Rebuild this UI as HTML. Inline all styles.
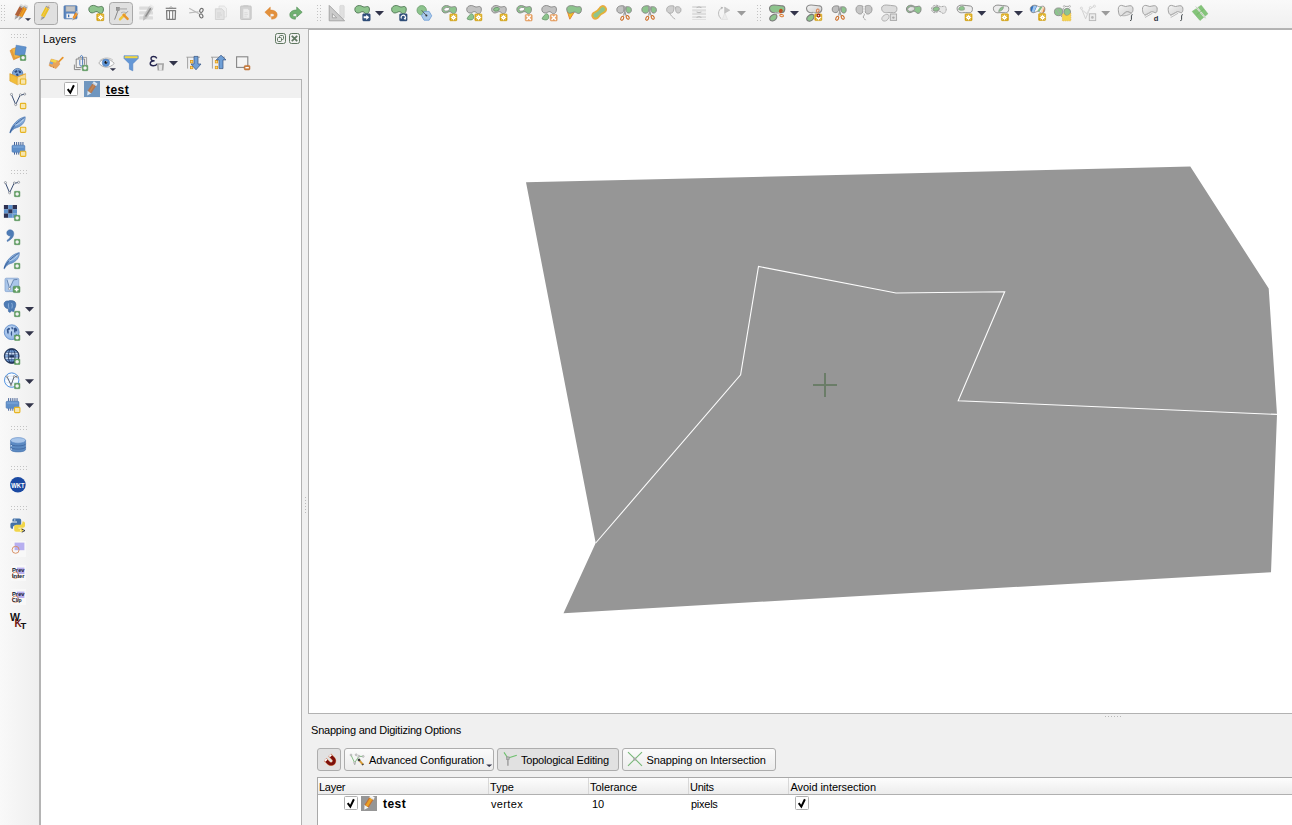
<!DOCTYPE html><html><head><meta charset="utf-8"><title>QGIS</title><style>
html,body{margin:0;padding:0;}
body{width:1292px;height:825px;overflow:hidden;background:#f0f0f0;position:relative;
 font-family:"Liberation Sans",sans-serif;font-size:11px;color:#000;}
.abs{position:absolute;}
#topbar{left:0;top:0;width:1292px;height:28px;background:linear-gradient(#f9f9f9,#f0f0f0);}
#topline{left:0;top:28px;width:1292px;height:1px;background:#b4b4b4;}
#topline2{left:308px;top:29px;width:984px;height:1px;background:#b4b4b4;}
#leftbar{left:0;top:29px;width:39px;height:796px;background:linear-gradient(90deg,#f9f9f9,#efefef);}
#leftline{left:39px;top:29px;width:1px;height:796px;background:#b4b4b4;}#leftline2{left:40px;top:79px;width:1px;height:746px;background:#b4b4b4;}
#tree{left:41px;top:79px;width:261px;height:760px;background:#fff;border:1px solid #b2b2b2;border-left:none;box-sizing:border-box;}
#treerow{left:41px;top:80px;width:260px;height:18px;background:#f0f0f0;}
#map{left:308px;top:29px;width:990px;height:685px;background:#fff;border:1px solid #b2b2b2;box-sizing:border-box;}
.t{position:absolute;white-space:nowrap;line-height:13px;}
.cb{position:absolute;width:14px;height:14px;box-sizing:border-box;border:1px solid #b0b0b0;border-radius:1.5px;background:#fff;}
.btn{position:absolute;box-sizing:border-box;border:1px solid #adadad;border-radius:3px;height:23px;top:748px;}
.hdr{position:absolute;top:779px;height:15px;box-sizing:border-box;border-right:1px solid #d5d5d5;background:#fff;}
</style></head><body>
<div class="abs" id="topbar"></div><div class="abs" id="topline"></div><div class="abs" id="topline2"></div>
<div class="abs" id="leftbar"></div><div class="abs" id="leftline"></div><div class="abs" id="leftline2"></div>
<div class="abs" id="tree"></div><div class="abs" id="treerow"></div>
<div class="abs" id="map"></div>
<div class="t" style="left:43px;top:33px;font-size:11px;letter-spacing:0.000px;">Layers</div>
<div class="cb" style="left:64px;top:82px;"></div>
<div class="abs" style="left:84px;top:81px;width:16px;height:16px;background:#6f96bf;"></div>
<div class="t" style="left:106px;top:83.5px;font-size:12px;letter-spacing:0.467px;font-weight:bold;text-decoration:underline;">test</div>
<div class="t" style="left:311px;top:724px;font-size:11px;letter-spacing:-0.210px;">Snapping and Digitizing Options</div>
<div class="btn" style="left:317px;width:24px;background:#e1e1e1;"></div>
<div class="btn" style="left:344px;width:150px;background:linear-gradient(#fbfbfb,#ececec);"></div>
<div class="btn" style="left:497px;width:122px;background:#e1e1e1;"></div>
<div class="btn" style="left:622px;width:154px;background:linear-gradient(#fbfbfb,#ececec);"></div>
<div class="t" style="left:369px;top:754px;font-size:11px;letter-spacing:-0.105px;">Advanced Configuration</div>
<div class="t" style="left:521px;top:754px;font-size:11px;letter-spacing:-0.206px;">Topological Editing</div>
<div class="t" style="left:646.5px;top:754px;font-size:11px;letter-spacing:-0.100px;">Snapping on Intersection</div>
<div class="abs" style="left:317px;top:777px;width:980px;height:60px;background:#fff;border:1px solid #a8a8a8;box-sizing:border-box;"></div>
<div class="abs" style="left:318px;top:778px;width:974px;height:17px;background:linear-gradient(#fdfdfd,#ececec);border-bottom:1px solid #b0b0b0;box-sizing:border-box;"></div>
<div class="abs" style="left:488px;top:778px;width:1px;height:16px;background:#d8d8d8;"></div>
<div class="abs" style="left:588px;top:778px;width:1px;height:16px;background:#d8d8d8;"></div>
<div class="abs" style="left:688px;top:778px;width:1px;height:16px;background:#d8d8d8;"></div>
<div class="abs" style="left:788px;top:778px;width:1px;height:16px;background:#d8d8d8;"></div>
<div class="t" style="left:319px;top:780.6px;font-size:11px;letter-spacing:-0.250px;">Layer</div>
<div class="t" style="left:490px;top:780.6px;font-size:11px;letter-spacing:0.033px;">Type</div>
<div class="t" style="left:590px;top:780.6px;font-size:11px;letter-spacing:-0.062px;">Tolerance</div>
<div class="t" style="left:690px;top:780.6px;font-size:11px;letter-spacing:-0.275px;">Units</div>
<div class="t" style="left:790.5px;top:780.6px;font-size:11px;letter-spacing:-0.065px;">Avoid intersection</div>
<div class="cb" style="left:344px;top:796px;"></div>
<div class="abs" style="left:361px;top:796px;width:16px;height:14.6px;background:#969696;"></div>
<div class="t" style="left:383px;top:797.5px;font-size:12px;letter-spacing:0.467px;font-weight:bold;">test</div>
<div class="t" style="left:491px;top:797.5px;font-size:11px;letter-spacing:0.340px;">vertex</div>
<div class="t" style="left:592px;top:797.5px;font-size:11px;letter-spacing:0.000px;">10</div>
<div class="t" style="left:691px;top:797.5px;font-size:11px;letter-spacing:-0.260px;">pixels</div>
<div class="cb" style="left:795px;top:796px;"></div>
<svg class="abs" style="left:0;top:0;" width="1292" height="825" viewBox="0 0 1292 825">
<defs>
<linearGradient id="gBadge" x1="0" y1="0" x2="0" y2="1"><stop offset="0" stop-color="#e4b62c"/><stop offset="1" stop-color="#d39f08"/></linearGradient>
<linearGradient id="gLt" x1="0" y1="0" x2="1" y2="1"><stop offset="0" stop-color="#f4f4f4"/><stop offset="1" stop-color="#cfcfcf"/></linearGradient>
<linearGradient id="gBlue" x1="0" y1="0" x2="0" y2="1"><stop offset="0" stop-color="#9fc0e6"/><stop offset="1" stop-color="#4d7fbd"/></linearGradient>
<linearGradient id="gTip" x1="0" y1="0" x2="0" y2="1"><stop offset="0" stop-color="#e8e8e8"/><stop offset="1" stop-color="#6e6e6e"/></linearGradient>
<radialGradient id="gGlobe" cx="0.4" cy="0.35" r="0.7"><stop offset="0" stop-color="#c0d6f2"/><stop offset="1" stop-color="#8eb2e4"/></radialGradient>
</defs>
<polygon points="526,182.3 1190.3,166.6 1268.7,288.5 1277,414.4 1271,572.2 563.5,613.2 595.7,543" fill="#969696"/>
<polyline points="595.7,543 740.6,374.8 758.5,266.4 896,293 1004.7,291.7 958.2,400.7 1277,414.4" fill="none" stroke="#fcfcfc" stroke-width="1.1" stroke-linejoin="miter"/>
<rect x="813" y="384" width="24" height="2" fill="#6b7d68"/><rect x="824" y="373" width="2" height="24" fill="#6b7d68"/>
<rect x="1" y="5" width="1" height="1" fill="#c3c3c3"/>
<rect x="4" y="5" width="1" height="1" fill="#c3c3c3"/>
<rect x="1" y="8" width="1" height="1" fill="#c3c3c3"/>
<rect x="4" y="8" width="1" height="1" fill="#c3c3c3"/>
<rect x="1" y="11" width="1" height="1" fill="#c3c3c3"/>
<rect x="4" y="11" width="1" height="1" fill="#c3c3c3"/>
<rect x="1" y="14" width="1" height="1" fill="#c3c3c3"/>
<rect x="4" y="14" width="1" height="1" fill="#c3c3c3"/>
<rect x="1" y="17" width="1" height="1" fill="#c3c3c3"/>
<rect x="4" y="17" width="1" height="1" fill="#c3c3c3"/>
<rect x="1" y="20" width="1" height="1" fill="#c3c3c3"/>
<rect x="4" y="20" width="1" height="1" fill="#c3c3c3"/>
<g transform="translate(14.6,19.8) rotate(-62)">
<path d="M0,0 L4.59,-2.0 V2.0 Z" fill="url(#gTip)"/>
<rect x="4.59" y="-2.0" width="9.52" height="4" fill="#b0623a"/>
<rect x="14.11" y="-2.0" width="2.89" height="4" fill="#dcdcdc"/>
<rect x="14.11" y="-2.0" width="1.02" height="4" fill="#9a9a9a"/>
</g>
<g transform="translate(18.4,20.6) rotate(-62)">
<path d="M0,0 L4.73,-2.0 V2.0 Z" fill="url(#gTip)"/>
<rect x="4.73" y="-2.0" width="9.80" height="4" fill="#e08a1c"/>
<rect x="4.73" y="-0.60" width="9.80" height="1.20" fill="#eea42c"/>
<rect x="14.52" y="-2.0" width="2.98" height="4" fill="#dcdcdc"/>
<rect x="14.52" y="-2.0" width="1.05" height="4" fill="#9a9a9a"/>
</g>
<path d="M25,18.2 h6 l-3.0,2.8 z" fill="#32344a"/>
<rect x="34.5" y="2.5" width="23" height="22" rx="3" fill="#e0e0e0" stroke="#a9a9a9"/>
<g transform="translate(40.6,20.6) rotate(-62)">
<path d="M0,0 L4.75,-2.1 V2.1 Z" fill="url(#gTip)"/>
<rect x="4.75" y="-2.1" width="9.86" height="4.2" fill="#e9c21c"/>
<rect x="4.75" y="-0.63" width="9.86" height="1.26" fill="#f6dc5c"/>
<rect x="14.61" y="-2.1" width="2.99" height="4.2" fill="#dcdcdc"/>
<rect x="14.61" y="-2.1" width="1.06" height="4.2" fill="#9a9a9a"/>
</g>
<path d="M43.2,16 L49.2,5.4" stroke="#e68a2c" stroke-width="0.6" opacity="0.7"/>
<rect x="64" y="5.8" width="13" height="13" rx="0.8" fill="#5b86c0" stroke="#4670a8" stroke-width="0.7"/>
<rect x="66" y="6.3" width="9" height="5" fill="#c4c4c4" stroke="#a8a8a8" stroke-width="0.5"/>
<rect x="66.4" y="13.6" width="7.8" height="4.6" fill="#f4f4f4"/>
<rect x="68" y="14.6" width="1.3" height="2.6" fill="#3f6fb0"/>
<g transform="translate(72.2,20.6) rotate(-58)">
<path d="M0,0 L2.81,-1.4 V1.4 Z" fill="url(#gTip)"/>
<rect x="2.81" y="-1.4" width="5.82" height="2.8" fill="#e8861c"/>
<rect x="2.81" y="-0.42" width="5.82" height="0.84" fill="#f2a640"/>
<rect x="8.63" y="-1.4" width="1.77" height="2.8" fill="#dcdcdc"/>
<rect x="8.63" y="-1.4" width="0.62" height="2.8" fill="#9a9a9a"/>
</g>
<path transform="translate(88.6,5.4)" d="M0.2,3.8 C0.2,1.4 2.4,0 4.8,0 C7,0 8,1.5 9.6,1.5 C11.2,1.5 12.4,0.7 13.4,1.1 C14.6,1.5 15,3 14.8,4.6 C14.6,6.6 13.6,8.2 11.8,8.2 C10.4,8.2 10,6.6 8.4,6.2 C6.8,5.8 5.6,7.4 3.6,7.5 C1.6,7.6 0.2,6 0.2,3.8 Z" fill="#8dc48d" stroke="#4f7554" stroke-width="0.9" />
<path d="M99.6,12.6 L100.2,14" stroke="#5e8c62" stroke-width="0.8"/>
<rect x="96.7" y="13.799999999999999" width="7.1" height="6.8999999999999995" rx="0.8" fill="url(#gBadge)" stroke="#cf9b06" stroke-width="0.5"/>
<polygon points="100.50,14.35 101.15,15.93 102.73,15.27 102.07,16.85 103.65,17.50 102.07,18.15 102.73,19.73 101.15,19.07 100.50,20.65 99.85,19.07 98.27,19.73 98.93,18.15 97.35,17.50 98.93,16.85 98.27,15.27 99.85,15.93" fill="#fff"/>
<circle cx="100.5" cy="17.5" r="0.6" fill="#efd27a"/>
<rect x="109.5" y="2.5" width="23" height="22" rx="3" fill="#e0e0e0" stroke="#a9a9a9"/>
<rect x="116.3" y="7.3" width="3.2" height="3" fill="#9a9a9a" stroke="#7a7a7a" stroke-width="0.5"/>
<path d="M119.6,8.9 H127" stroke="#b8b8b8" stroke-width="1.5"/>
<path d="M118,10.4 L114.6,19.6" stroke="#808080" stroke-width="0.9"/>
<path d="M128,11.2 L122.4,17" stroke="#8a8a8a" stroke-width="0.9"/>
<path d="M121,13 a3,2 0 0 1 5,0" stroke="#b0b0b0" stroke-width="1" fill="none"/>
<path d="M120,19.3 L124.6,14.6" stroke="#f0c83c" stroke-width="2.4" stroke-linecap="round"/>
<path d="M123.6,14.8 L127.6,18.9" stroke="#e8952c" stroke-width="2.4" stroke-linecap="round"/>
<rect x="139.2" y="6.4" width="13.8" height="3.3" rx="0.6" fill="#dcdcdc"/>
<rect x="139.2" y="11.3" width="13.8" height="3.3" rx="0.6" fill="#dcdcdc"/>
<rect x="139.2" y="16.3" width="13.8" height="3.3" rx="0.6" fill="#dcdcdc"/>
<g transform="translate(143,20.8) rotate(-58.5)">
<path d="M0,0 L4.86,-2.3 V2.3 Z" fill="#bcbcbc"/>
<rect x="4.86" y="-2.3" width="10.08" height="4.6" fill="#c6c6c6"/>
<rect x="4.86" y="-0.78" width="10.08" height="1.56" fill="#8c8c8c"/>
<rect x="14.94" y="-2.3" width="3.06" height="4.6" fill="#ececec"/>
<rect x="14.94" y="-2.3" width="1.08" height="4.6" fill="#cfcfcf"/>
</g>
<path d="M165.7,8.3 H176.3" stroke="#7b7b7b" stroke-width="1.2"/>
<path d="M169.3,7.8 Q171,5.6 172.7,7.8" stroke="#a0a0a0" stroke-width="0.9" fill="none"/>
<path d="M166.6,10.6 H175.5 L175.2,19.3 H166.9 Z" fill="#fdfdfd" stroke="#7b7b7b" stroke-width="1.3" stroke-linejoin="round"/>
<path d="M169.5,10.8 V19 M172.7,10.8 V19" stroke="#7b7b7b" stroke-width="1.1"/>
<path d="M189.2,8.2 L199,13.8 M189.2,12.9 L198.6,11.8" stroke="#bdbdbd" stroke-width="1.1" fill="none"/>
<ellipse cx="201.4" cy="10.4" rx="1.6" ry="2.1" transform="rotate(25 201.4 10.4)" fill="none" stroke="#707070" stroke-width="1.1"/>
<ellipse cx="201.2" cy="15.9" rx="1.6" ry="2.1" transform="rotate(-25 201.2 15.9)" fill="none" stroke="#707070" stroke-width="1.1"/>
<path d="M219,6 h5.2 l2.3,2.3 v8.7 h-7.5 z" fill="#f0f0f0" stroke="#dadada" stroke-width="0.7"/>
<path d="M215.4,8.8 h6.3 l2.4,2.4 v8.3 h-8.7 z" fill="#e3e3e3" stroke="#cfcfcf" stroke-width="0.8"/>
<path d="M217,13 h4 M217,15 h5 M217,17 h3" stroke="#d2d2d2" stroke-width="0.8"/>
<rect x="240.6" y="6" width="10.6" height="13.5" rx="0.8" fill="#d2d2d2" stroke="#c0c0c0" stroke-width="0.8"/>
<rect x="243.4" y="5.2" width="5" height="1.8" fill="#cacaca"/>
<path d="M243,8.6 h4.6 l2,2 v7.6 h-6.6 z" fill="#ececec" stroke="#cdcdcd" stroke-width="0.5"/>
<path d="M244.4,12.6 h3 M244.4,14.4 h3.6 M244.4,16.2 h2.4" stroke="#d6d6d6" stroke-width="0.7"/>
<path d="M264.8,12.2 L270.3,7 V10 C274.6,10 277.2,11.9 277.2,14.8 C277.2,17.6 274.9,19.3 271.6,19.2 L271.4,16.4 C273.3,16.6 274.3,15.9 274.2,14.9 C274.1,13.9 272.8,13.6 270.3,13.7 V17.2 Z" fill="#e2903c" stroke="#d8822c" stroke-width="0.4"/>
<path d="M302.2,12.2 L296.7,7 V10 C292.4,10 289.8,11.9 289.8,14.8 C289.8,17.6 292.1,19.3 295.4,19.2 L295.6,16.4 C293.7,16.6 292.7,15.9 292.8,14.9 C292.9,13.9 294.2,13.6 296.7,13.7 V17.2 Z" fill="#6fb070" stroke="#548f58" stroke-width="0.6"/>
<rect x="317" y="5" width="1" height="1" fill="#c3c3c3"/>
<rect x="320" y="5" width="1" height="1" fill="#c3c3c3"/>
<rect x="317" y="8" width="1" height="1" fill="#c3c3c3"/>
<rect x="320" y="8" width="1" height="1" fill="#c3c3c3"/>
<rect x="317" y="11" width="1" height="1" fill="#c3c3c3"/>
<rect x="320" y="11" width="1" height="1" fill="#c3c3c3"/>
<rect x="317" y="14" width="1" height="1" fill="#c3c3c3"/>
<rect x="320" y="14" width="1" height="1" fill="#c3c3c3"/>
<rect x="317" y="17" width="1" height="1" fill="#c3c3c3"/>
<rect x="320" y="17" width="1" height="1" fill="#c3c3c3"/>
<rect x="317" y="20" width="1" height="1" fill="#c3c3c3"/>
<rect x="320" y="20" width="1" height="1" fill="#c3c3c3"/>
<rect x="339.8" y="5.4" width="4.4" height="13" rx="1" fill="#e0e0e0" stroke="#d2d2d2" stroke-width="0.6"/>
<path d="M329.2,5.4 V20.8 H344.6 Z M332.4,13.6 V17.8 H336.6 Z" fill="#cbcbcb" stroke="#a0a0a0" stroke-width="0.9" fill-rule="evenodd"/>
<path transform="translate(354.6,5.5)" d="M0.2,3.8 C0.2,1.4 2.4,0 4.8,0 C7,0 8,1.5 9.6,1.5 C11.2,1.5 12.4,0.7 13.4,1.1 C14.6,1.5 15,3 14.8,4.6 C14.6,6.6 13.6,8.2 11.8,8.2 C10.4,8.2 10,6.6 8.4,6.2 C6.8,5.8 5.6,7.4 3.6,7.5 C1.6,7.6 0.2,6 0.2,3.8 Z" fill="#8dc48d" stroke="#4f7554" stroke-width="0.9" />
<rect x="362.7" y="13.8" width="7.5" height="7.1" rx="1" fill="#33527f" stroke="#27426c" stroke-width="0.5"/>
<path d="M363.65,16.35 h2.6 v-1.7 l3,2.7 l-3,2.7 v-1.7 h-2.6 z" fill="#fff"/>
<path d="M375,11 h9 l-4.5,4.8 z" fill="#32344a"/>
<path transform="translate(391.4,5.5)" d="M0.2,3.8 C0.2,1.4 2.4,0 4.8,0 C7,0 8,1.5 9.6,1.5 C11.2,1.5 12.4,0.7 13.4,1.1 C14.6,1.5 15,3 14.8,4.6 C14.6,6.6 13.6,8.2 11.8,8.2 C10.4,8.2 10,6.6 8.4,6.2 C6.8,5.8 5.6,7.4 3.6,7.5 C1.6,7.6 0.2,6 0.2,3.8 Z" fill="#8dc48d" stroke="#4f7554" stroke-width="0.9" />
<rect x="399.6" y="13.8" width="7.5" height="7.1" rx="1" fill="#33527f" stroke="#27426c" stroke-width="0.5"/>
<path d="M401.45000000000005,18.55 A2.2,2.2 0 1 1 404.95000000000005,18.85" fill="none" stroke="#fff" stroke-width="1.2"/>
<path d="M403.55,17.950000000000003 l2.6,-0.4 l-0.9,2.6 z" fill="#fff"/>
<circle cx="421.7" cy="10.3" r="4.7" fill="#8dc48d" stroke="#6c9c6e" stroke-width="0.8"/>
<polygon points="431.70,15.80 429.15,20.22 424.05,20.22 421.50,15.80 424.05,11.38 429.15,11.38" fill="#a9c9ea" stroke="#6b9ad4" stroke-width="0.8"/>
<path d="M421.7,10.3 L426.3,15.5" stroke="#4a4a4a" stroke-width="0.8"/><circle cx="426.4" cy="15.6" r="1" fill="#333"/>
<path transform="translate(441.7,5.5)" d="M0.2,3.8 C0.2,1.4 2.4,0 4.8,0 C7,0 8,1.5 9.6,1.5 C11.2,1.5 12.4,0.7 13.4,1.1 C14.6,1.5 15,3 14.8,4.6 C14.6,6.6 13.6,8.2 11.8,8.2 C10.4,8.2 10,6.6 8.4,6.2 C6.8,5.8 5.6,7.4 3.6,7.5 C1.6,7.6 0.2,6 0.2,3.8 Z" fill="#8dc48d" stroke="#858585" stroke-width="0.9" />
<ellipse cx="446.7" cy="9.3" rx="2.9" ry="1.8" transform="rotate(-12 446.7 9.3)" fill="#fdfdfd" stroke="#858585" stroke-width="0.7"/>
<rect x="449.8" y="13.899999999999999" width="7.1" height="6.8999999999999995" rx="0.8" fill="url(#gBadge)" stroke="#cf9b06" stroke-width="0.5"/>
<polygon points="453.50,14.35 454.15,15.93 455.73,15.27 455.07,16.85 456.65,17.50 455.07,18.15 455.73,19.73 454.15,19.07 453.50,20.65 452.85,19.07 451.27,19.73 451.93,18.15 450.35,17.50 451.93,16.85 451.27,15.27 452.85,15.93" fill="#fff"/>
<circle cx="453.5" cy="17.5" r="0.6" fill="#efd27a"/>
<path transform="translate(466.5,5.5)" d="M0.2,3.8 C0.2,1.4 2.4,0 4.8,0 C7,0 8,1.5 9.6,1.5 C11.2,1.5 12.4,0.7 13.4,1.1 C14.6,1.5 15,3 14.8,4.6 C14.6,6.6 13.6,8.2 11.8,8.2 C10.4,8.2 10,6.6 8.4,6.2 C6.8,5.8 5.6,7.4 3.6,7.5 C1.6,7.6 0.2,6 0.2,3.8 Z" fill="#c2c2c2" stroke="#858585" stroke-width="0.9" />
<path d="M467,18.9 C468,16.299999999999997 470,14.299999999999999 471.6,13.7 C473.6,13.899999999999999 474,16.9 473.4,18.5 C472.4,20.299999999999997 470,20.5 467,18.9 Z" fill="#8dc48d" stroke="#5e8c62" stroke-width="0.7"/>
<rect x="474.8" y="13.899999999999999" width="7.1" height="6.8999999999999995" rx="0.8" fill="url(#gBadge)" stroke="#cf9b06" stroke-width="0.5"/>
<polygon points="478.50,14.35 479.15,15.93 480.73,15.27 480.07,16.85 481.65,17.50 480.07,18.15 480.73,19.73 479.15,19.07 478.50,20.65 477.85,19.07 476.27,19.73 476.93,18.15 475.35,17.50 476.93,16.85 476.27,15.27 477.85,15.93" fill="#fff"/>
<circle cx="478.5" cy="17.5" r="0.6" fill="#efd27a"/>
<path transform="translate(491.4,5.5)" d="M0.2,3.8 C0.2,1.4 2.4,0 4.8,0 C7,0 8,1.5 9.6,1.5 C11.2,1.5 12.4,0.7 13.4,1.1 C14.6,1.5 15,3 14.8,4.6 C14.6,6.6 13.6,8.2 11.8,8.2 C10.4,8.2 10,6.6 8.4,6.2 C6.8,5.8 5.6,7.4 3.6,7.5 C1.6,7.6 0.2,6 0.2,3.8 Z" fill="#c2c2c2" stroke="#858585" stroke-width="0.9" />
<ellipse cx="496.4" cy="9.3" rx="2.9" ry="1.8" transform="rotate(-12 496.4 9.3)" fill="#8dc48d" stroke="#5e8c62" stroke-width="0.7"/>
<rect x="500.0" y="13.899999999999999" width="7.1" height="6.8999999999999995" rx="0.8" fill="url(#gBadge)" stroke="#cf9b06" stroke-width="0.5"/>
<polygon points="503.50,14.35 504.15,15.93 505.73,15.27 505.07,16.85 506.65,17.50 505.07,18.15 505.73,19.73 504.15,19.07 503.50,20.65 502.85,19.07 501.27,19.73 501.93,18.15 500.35,17.50 501.93,16.85 501.27,15.27 502.85,15.93" fill="#fff"/>
<circle cx="503.5" cy="17.5" r="0.6" fill="#efd27a"/>
<path transform="translate(516.6,5.5)" d="M0.2,3.8 C0.2,1.4 2.4,0 4.8,0 C7,0 8,1.5 9.6,1.5 C11.2,1.5 12.4,0.7 13.4,1.1 C14.6,1.5 15,3 14.8,4.6 C14.6,6.6 13.6,8.2 11.8,8.2 C10.4,8.2 10,6.6 8.4,6.2 C6.8,5.8 5.6,7.4 3.6,7.5 C1.6,7.6 0.2,6 0.2,3.8 Z" fill="#8dc48d" stroke="#858585" stroke-width="0.9" />
<ellipse cx="521.8" cy="9.3" rx="2.9" ry="1.8" transform="rotate(-12 521.8 9.3)" fill="#fdfdfd" stroke="#858585" stroke-width="0.7"/>
<rect x="525.2" y="14.5" width="7" height="6.5" rx="1" fill="#e8a468" stroke="#dd9352" stroke-width="0.5"/>
<path d="M527.0,16.05 L530.4000000000001,19.45 M530.4000000000001,16.05 L527.0,19.45" stroke="#fff" stroke-width="1.5" stroke-linecap="round"/>
<path transform="translate(541.6,5.5)" d="M0.2,3.8 C0.2,1.4 2.4,0 4.8,0 C7,0 8,1.5 9.6,1.5 C11.2,1.5 12.4,0.7 13.4,1.1 C14.6,1.5 15,3 14.8,4.6 C14.6,6.6 13.6,8.2 11.8,8.2 C10.4,8.2 10,6.6 8.4,6.2 C6.8,5.8 5.6,7.4 3.6,7.5 C1.6,7.6 0.2,6 0.2,3.8 Z" fill="#c2c2c2" stroke="#858585" stroke-width="0.9" />
<path d="M542,18.9 C543,16.299999999999997 545,14.299999999999999 546.6,13.7 C548.6,13.899999999999999 549,16.9 548.4,18.5 C547.4,20.299999999999997 545,20.5 542,18.9 Z" fill="#8dc48d" stroke="#5e8c62" stroke-width="0.7"/>
<rect x="550.2" y="14.5" width="7" height="6.5" rx="1" fill="#e8a468" stroke="#dd9352" stroke-width="0.5"/>
<path d="M552.0,16.05 L555.4000000000001,19.45 M555.4000000000001,16.05 L552.0,19.45" stroke="#fff" stroke-width="1.5" stroke-linecap="round"/>
<path d="M567.4,11.6 L569.8,19.2 L574.2,12.2 Z" fill="#f2c21e" stroke="#e2883a" stroke-width="1" stroke-linejoin="round"/>
<path d="M566.8,10 C566.2,7 568.6,5.5 571.6,5.6 C574.2,5.6 575.4,6.8 577,6.8 C578.8,6.7 581,5.9 581.4,8.8 C581.7,11.4 580.6,13.2 578.8,13.5 C577,13.7 576.4,12.2 574.6,12 C573,12 571.6,13.4 569.6,13.2 C568,13 567,11.8 566.8,10 Z" fill="#8dc48d" stroke="#858585" stroke-width="0.9"/>
<g transform="translate(599.2,12.4) rotate(-40)">
<path d="M-8,0 C-8,-3.1 -5,-3.8 -3,-3 C-1,-2.3 1,-2.3 3,-3 C5,-3.8 8,-3.1 8,0 C8,3.1 5,3.8 3,3 C1,2.3 -1,2.3 -3,3 C-5,3.8 -8,3.1 -8,0 Z" fill="#8dc48d" stroke="#e9a74a" stroke-width="1.9"/>
<path d="M-8,0 C-8,-3.1 -5,-3.8 -3,-3 C-1,-2.3 1,-2.3 3,-3 C5,-3.8 8,-3.1 8,0 C8,3.1 5,3.8 3,3 C1,2.3 -1,2.3 -3,3 C-5,3.8 -8,3.1 -8,0 Z" fill="none" stroke="#dcc024" stroke-width="0.9" transform="scale(0.9)"/>
</g>
<path transform="translate(616.6,5.5)" d="M7.6,0.6 C5,-0.2 0.4,0.2 0.2,4 C0,6.8 2.6,8.2 5,7.6 C6.8,7.2 7.4,5 7.6,3 Z" fill="#c2c2c2" stroke="#858585" stroke-width="0.9"/>
<path transform="translate(625.8,6)" d="M0.2,1 C2,0.2 5.4,0.6 5.6,3.6 C5.8,6.2 4,7.4 2.2,7 C0.6,6.6 0.3,5 0.2,3.6 Z" fill="#8dc48d" stroke="#858585" stroke-width="0.9"/>
<path d="M623.5,6.4 L626.0,15.636000000000001 M626.0999999999999,6.4 L623.5999999999999,15.636000000000001" stroke="#9c9c9c" stroke-width="1.3" fill="none"/>
<ellipse cx="622.1999999999999" cy="18.3" rx="1.3" ry="2.1" transform="rotate(28 622.1999999999999 18.3)" fill="none" stroke="#cc6a22" stroke-width="1.05"/>
<ellipse cx="627.6999999999999" cy="17.400000000000002" rx="1.3" ry="2.0" transform="rotate(-35 627.6999999999999 17.400000000000002)" fill="none" stroke="#cc6a22" stroke-width="1.05"/>
<path transform="translate(641.6,5.5)" d="M7.6,0.6 C5,-0.2 0.4,0.2 0.2,4 C0,6.8 2.6,8.2 5,7.6 C6.8,7.2 7.4,5 7.6,3 Z" fill="#8dc48d" stroke="#858585" stroke-width="0.9"/>
<path transform="translate(650.8,6)" d="M0.2,1 C2,0.2 5.4,0.6 5.6,3.6 C5.8,6.2 4,7.4 2.2,7 C0.6,6.6 0.3,5 0.2,3.6 Z" fill="#8dc48d" stroke="#858585" stroke-width="0.9"/>
<path d="M648.5,6.4 L651.0,15.636000000000001 M651.0999999999999,6.4 L648.5999999999999,15.636000000000001" stroke="#9c9c9c" stroke-width="1.3" fill="none"/>
<ellipse cx="647.1999999999999" cy="18.3" rx="1.3" ry="2.1" transform="rotate(28 647.1999999999999 18.3)" fill="none" stroke="#cc6a22" stroke-width="1.05"/>
<ellipse cx="652.6999999999999" cy="17.400000000000002" rx="1.3" ry="2.0" transform="rotate(-35 652.6999999999999 17.400000000000002)" fill="none" stroke="#cc6a22" stroke-width="1.05"/>
<path transform="translate(666.4,5.5)" d="M7.6,0.6 C5,-0.2 0.4,0.2 0.2,4 C0,6.8 2.6,8.2 5,7.6 C6.8,7.2 7.4,5 7.6,3 Z" fill="#cfcfcf" stroke="#a2a2a2" stroke-width="0.8"/>
<path transform="translate(675.4,6)" d="M0.2,1 C2,0.2 5.4,0.6 5.6,3.6 C5.8,6.2 4,7.4 2.2,7 C0.6,6.6 0.3,5 0.2,3.6 Z" fill="#cfcfcf" stroke="#a2a2a2" stroke-width="0.8"/>
<path d="M669.6,13 C670.6,15.4 672.6,17.4 675.2,19.2" stroke="#a0a0a0" stroke-width="0.8" fill="none"/>
<rect x="692.2" y="6" width="13.8" height="2" fill="#dedede"/>
<rect x="692.2" y="9.2" width="13.8" height="2.3" fill="#dedede"/>
<rect x="692.2" y="12.7" width="13.8" height="2.3" fill="#dedede"/>
<rect x="692.2" y="16.2" width="13.8" height="1.8" fill="#dedede"/>
<rect x="692.2" y="19" width="13.8" height="0.9" fill="#dedede"/>
<path d="M696.6,7.6 q2.4,-1.4 4.8,0 M696.6,12 q2.4,1.4 4.8,0 M696.6,17.4 q2.4,-1.4 4.8,0" stroke="#b0b0b0" stroke-width="0.9" fill="none"/>
<path d="M722.2,19.5 H727.6 L724.8,13 Z" fill="#ececec" stroke="#dcdcdc" stroke-width="0.6"/>
<path d="M724.6,7 L729.8,10.2 L724.6,13.2 Z" fill="#c4c4c4" stroke="#b4b4b4" stroke-width="0.5"/>
<path d="M721.4,19 C717.4,16 717.6,10 722,7.6" stroke="#b4b4b4" stroke-width="0.9" fill="none"/>
<path d="M720.6,6.8 l2.6,0.4 l-1.4,2.2 z" fill="#b4b4b4"/>
<path d="M737,11 h9 l-4.5,4.8 z" fill="#9b9b9b"/>
<rect x="757" y="5" width="1" height="1" fill="#c3c3c3"/>
<rect x="760" y="5" width="1" height="1" fill="#c3c3c3"/>
<rect x="757" y="8" width="1" height="1" fill="#c3c3c3"/>
<rect x="760" y="8" width="1" height="1" fill="#c3c3c3"/>
<rect x="757" y="11" width="1" height="1" fill="#c3c3c3"/>
<rect x="760" y="11" width="1" height="1" fill="#c3c3c3"/>
<rect x="757" y="14" width="1" height="1" fill="#c3c3c3"/>
<rect x="760" y="14" width="1" height="1" fill="#c3c3c3"/>
<rect x="757" y="17" width="1" height="1" fill="#c3c3c3"/>
<rect x="760" y="17" width="1" height="1" fill="#c3c3c3"/>
<rect x="757" y="20" width="1" height="1" fill="#c3c3c3"/>
<rect x="760" y="20" width="1" height="1" fill="#c3c3c3"/>
<path transform="translate(769.7,14.1)" d="M6.2,0.3 C7.6,0.8 7.5,3.2 6.3,4.9 C5,6.8 2.4,7.3 1,6.5 C-0.5,5.6 -0.2,3.4 1.2,2 C2.6,0.6 4.8,-0.2 6.2,0.3 Z" fill="#8dc48d" stroke="#7a7a7a" stroke-width="1.1"/>
<path transform="translate(769.1,5)" d="M0.4,3.6 C0.2,1.2 2.4,0 5,0 C8,0 11,0.8 13.6,0.9 C15.2,1 15.9,2.4 15.7,4.4 C15.5,6.6 14.4,7.6 12.4,7.7 C10,7.8 8,7.2 6,7.6 C3.6,8 0.7,7.2 0.4,3.6 Z" fill="#8dc48d" stroke="#7c7c7c" stroke-width="1.1"/>
<path d="M774.8,12.700000000000001 L779.4,13.5 M775.1999999999999,13.9 L780.0,11.9" stroke="#c2c2c2" stroke-width="1"/>
<ellipse cx="780.8" cy="10.9" rx="1.3" ry="1.7" transform="rotate(30 780.8 10.9)" fill="#b8502a" stroke="#c0501c" stroke-width="1.1"/>
<ellipse cx="781.5999999999999" cy="15.600000000000001" rx="1.9" ry="1.1" transform="rotate(12 781.5999999999999 15.600000000000001)" fill="#fbeee2" stroke="#d87830" stroke-width="1"/>
<path d="M790,11 h9 l-4.5,4.8 z" fill="#32344a"/>
<path transform="translate(806.7,14.3)" d="M6.2,0.3 C7.6,0.8 7.5,3.2 6.3,4.9 C5,6.8 2.4,7.3 1,6.5 C-0.5,5.6 -0.2,3.4 1.2,2 C2.6,0.6 4.8,-0.2 6.2,0.3 Z" fill="#8dc48d" stroke="#7a7a7a" stroke-width="1.1"/>
<path transform="translate(806.1,5)" d="M0.4,3.6 C0.2,1.2 2.4,0 5,0 C8,0 11,0.8 13.6,0.9 C15.2,1 15.9,2.4 15.7,4.4 C15.5,6.6 14.4,7.6 12.4,7.7 C10,7.8 8,7.2 6,7.6 C3.6,8 0.7,7.2 0.4,3.6 Z" fill="url(#gLt)" stroke="#8a8a8a" stroke-width="1.1"/>
<ellipse cx="817.7" cy="10.6" rx="1.3" ry="1.7" transform="rotate(30 817.7 10.6)" fill="#f4d8c4" stroke="#d88050" stroke-width="1"/>
<path d="M812.4,12.2 L816.4,13" stroke="#b4b4b4" stroke-width="1"/>
<rect x="814.7" y="13.899999999999999" width="7.1" height="6.699999999999999" rx="0.8" fill="url(#gBadge)" stroke="#cf9b06" stroke-width="0.5"/>
<polygon points="818.50,14.35 819.15,15.93 820.73,15.27 820.07,16.85 821.65,17.50 820.07,18.15 820.73,19.73 819.15,19.07 818.50,20.65 817.85,19.07 816.27,19.73 816.93,18.15 815.35,17.50 816.93,16.85 816.27,15.27 817.85,15.93" fill="#fff"/>
<circle cx="818.5" cy="17.5" r="0.6" fill="#efd27a"/>
<circle cx="818.5" cy="15.6" r="1.4" fill="#f4e0d0" stroke="#a02418" stroke-width="1.2"/>
<path d="M838.8,6.2 C836,5.4 832.4,5.8 832.2,9 C832,11.8 834,12.8 836,12.6 C837.8,12.4 838.6,11 838.8,9 Z" fill="#bfbfbf" stroke="#858585" stroke-width="0.9"/>
<path d="M841.2,7 C843,6.4 846,6.6 846.2,9.4 C846.4,12 845,13.2 843.4,13 C841.8,12.8 841.3,11.4 841.2,10 Z" fill="#8dc48d" stroke="#858585" stroke-width="0.9"/>
<path d="M838.5,6.4 L841.0,15.636000000000001 M841.0999999999999,6.4 L838.5999999999999,15.636000000000001" stroke="#9c9c9c" stroke-width="1.3" fill="none"/>
<ellipse cx="837.1999999999999" cy="18.3" rx="1.3" ry="2.1" transform="rotate(28 837.1999999999999 18.3)" fill="none" stroke="#cc6a22" stroke-width="1.05"/>
<ellipse cx="842.6999999999999" cy="17.400000000000002" rx="1.3" ry="2.0" transform="rotate(-35 842.6999999999999 17.400000000000002)" fill="none" stroke="#cc6a22" stroke-width="1.05"/>
<path d="M863,6.4 C860,4.6 856.2,5.2 856,9 C855.8,12.6 859,14.8 861.4,13.8 C862.6,13.2 863,11 863,9 Z" fill="#c6c6c6" stroke="#959595" stroke-width="0.9"/>
<path d="M865,6.4 C868,4.6 871.8,5.2 872,9 C872.2,12.6 869,14.8 866.6,13.8 C865.4,13.2 865,11 865,9 Z" fill="#c6c6c6" stroke="#959595" stroke-width="0.9"/>
<path d="M863,7.4 h2 M863,9 h2 M863,10.6 h2" stroke="#f4f4f4" stroke-width="0.8"/>
<path d="M864,13.6 C865.6,15 862,16.6 863.6,18 C864.4,18.8 865,19.2 865.6,20.2" stroke="#9c9c9c" stroke-width="0.9" fill="none"/>
<path transform="translate(881.8,14.2)" d="M6.2,0.3 C7.6,0.8 7.5,3.2 6.3,4.9 C5,6.8 2.4,7.3 1,6.5 C-0.5,5.6 -0.2,3.4 1.2,2 C2.6,0.6 4.8,-0.2 6.2,0.3 Z" fill="#e2e2e2" stroke="#b4b4b4" stroke-width="1.0"/>
<path transform="translate(881.2,5)" d="M0.4,3.6 C0.2,1.2 2.4,0 5,0 C8,0 11,0.8 13.6,0.9 C15.2,1 15.9,2.4 15.7,4.4 C15.5,6.6 14.4,7.6 12.4,7.7 C10,7.8 8,7.2 6,7.6 C3.6,8 0.7,7.2 0.4,3.6 Z" fill="#dcdcdc" stroke="#ababab" stroke-width="1.0"/>
<rect x="890.3" y="14" width="6.3" height="6.4" fill="#e0e0e0" stroke="#a6a6a6" stroke-width="0.9"/><circle cx="893.4" cy="17.6" r="1.2" fill="#a8a8a8"/>
<path transform="translate(906.2,5.2)" d="M0.2,3.8 C0.2,1.4 2.4,0 4.8,0 C7,0 8,1.5 9.6,1.5 C11.2,1.5 12.4,0.7 13.4,1.1 C14.6,1.5 15,3 14.8,4.6 C14.6,6.6 13.6,8.2 11.8,8.2 C10.4,8.2 10,6.6 8.4,6.2 C6.8,5.8 5.6,7.4 3.6,7.5 C1.6,7.6 0.2,6 0.2,3.8 Z" fill="#8dc48d" stroke="#8a8a8a" stroke-width="1.0" />
<ellipse cx="911.2" cy="9" rx="3.6" ry="2.4" transform="rotate(-12 911.2 9)" fill="url(#gLt)" stroke="#8f8f8f" stroke-width="0.8"/>
<path transform="translate(931.4,5.2)" d="M0.2,3.8 C0.2,1.4 2.4,0 4.8,0 C7,0 8,1.5 9.6,1.5 C11.2,1.5 12.4,0.7 13.4,1.1 C14.6,1.5 15,3 14.8,4.6 C14.6,6.6 13.6,8.2 11.8,8.2 C10.4,8.2 10,6.6 8.4,6.2 C6.8,5.8 5.6,7.4 3.6,7.5 C1.6,7.6 0.2,6 0.2,3.8 Z" fill="#e6e6e6" stroke="#9c9c9c" stroke-width="0.9" stroke-dasharray="2.2 0.8"/>
<ellipse cx="936.2" cy="9" rx="3.2" ry="2.2" transform="rotate(-12 936.2 9)" fill="#8dc48d" stroke="#8a8a8a" stroke-width="0.8"/>
<path transform="translate(956.7,5.1)" d="M0.4,3.6 C0.2,1.2 2.4,0 5,0 C8,0 11,0.8 13.6,0.9 C15.2,1 15.9,2.4 15.7,4.4 C15.5,6.6 14.4,7.6 12.4,7.7 C10,7.8 8,7.2 6,7.6 C3.6,8 0.7,7.2 0.4,3.6 Z" fill="#ececec" stroke="#8f8f8f" stroke-width="1.0"/>
<path d="M958.6,9.4 C958.8,7 961,6 963,6.4 C964.4,6.8 964.8,8.6 964.2,9.8 C962.6,10.6 960.2,10.4 958.6,9.4 Z" fill="#8dc48d" stroke="#7d8f7d" stroke-width="0.6"/>
<rect x="965.0" y="13.799999999999999" width="7.1" height="6.8999999999999995" rx="0.8" fill="url(#gBadge)" stroke="#cf9b06" stroke-width="0.5"/>
<polygon points="968.50,14.35 969.15,15.93 970.73,15.27 970.07,16.85 971.65,17.50 970.07,18.15 970.73,19.73 969.15,19.07 968.50,20.65 967.85,19.07 966.27,19.73 966.93,18.15 965.35,17.50 966.93,16.85 966.27,15.27 967.85,15.93" fill="#fff"/>
<circle cx="968.5" cy="17.5" r="0.6" fill="#efd27a"/>
<path d="M977.2,11 h9 l-4.5,4.8 z" fill="#32344a"/>
<path transform="translate(993,5.1)" d="M0.4,3.6 C0.2,1.2 2.4,0 5,0 C8,0 11,0.8 13.6,0.9 C15.2,1 15.9,2.4 15.7,4.4 C15.5,6.6 14.4,7.6 12.4,7.7 C10,7.8 8,7.2 6,7.6 C3.6,8 0.7,7.2 0.4,3.6 Z" fill="#ececec" stroke="#8f8f8f" stroke-width="1.0"/>
<path d="M998.6,11.6 C999,9 1001,6.8 1003.4,6.6 C1003.8,8.8 1001.8,11.2 998.6,11.6 Z" fill="#8dc48d" stroke="#7d8f7d" stroke-width="0.6"/>
<rect x="1001.4000000000001" y="13.799999999999999" width="7.1" height="6.8999999999999995" rx="0.8" fill="url(#gBadge)" stroke="#cf9b06" stroke-width="0.5"/>
<polygon points="1004.50,14.35 1005.15,15.93 1006.73,15.27 1006.07,16.85 1007.65,17.50 1006.07,18.15 1006.73,19.73 1005.15,19.07 1004.50,20.65 1003.85,19.07 1002.27,19.73 1002.93,18.15 1001.35,17.50 1002.93,16.85 1002.27,15.27 1003.85,15.93" fill="#fff"/>
<circle cx="1004.5" cy="17.5" r="0.6" fill="#efd27a"/>
<path d="M1014,11 h9 l-4.5,4.8 z" fill="#32344a"/>
<clipPath id="cp38"><path transform="translate(1030,5.2)" d="M0.2,3.8 C0.2,1.4 2.4,0 4.8,0 C7,0 8,1.5 9.6,1.5 C11.2,1.5 12.4,0.7 13.4,1.1 C14.6,1.5 15,3 14.8,4.6 C14.6,6.6 13.6,8.2 11.8,8.2 C10.4,8.2 10,6.6 8.4,6.2 C6.8,5.8 5.6,7.4 3.6,7.5 C1.6,7.6 0.2,6 0.2,3.8 Z"/></clipPath>
<g clip-path="url(#cp38)"><rect x="1029" y="4" width="18" height="11" fill="#f6f6f6"/>
<path d="M1029,4 h9 l-5,11 h-4 z" fill="#2f6fc0"/><path d="M1034,4 h3.4 l-4.6,11 h-2 z" fill="#9cc4ee"/>
<path d="M1040.4,6.6 l2,0.6 l-3.6,5.4 l-2,-0.8 z" fill="#7fbe7f"/>
<path d="M1043.6,6 h4 v9 h-6 z" fill="#e8843a"/><path d="M1042.4,7 l2.4,-1 l-3,8 l-2,0 z" fill="#f7d8b8"/></g>
<path transform="translate(1030,5.2)" d="M0.2,3.8 C0.2,1.4 2.4,0 4.8,0 C7,0 8,1.5 9.6,1.5 C11.2,1.5 12.4,0.7 13.4,1.1 C14.6,1.5 15,3 14.8,4.6 C14.6,6.6 13.6,8.2 11.8,8.2 C10.4,8.2 10,6.6 8.4,6.2 C6.8,5.8 5.6,7.4 3.6,7.5 C1.6,7.6 0.2,6 0.2,3.8 Z" fill="none" stroke="#8f8f8f" stroke-width="0.9" />
<rect x="1038.5" y="13.6" width="7.1" height="6.8999999999999995" rx="0.8" fill="url(#gBadge)" stroke="#cf9b06" stroke-width="0.5"/>
<polygon points="1042.50,14.35 1043.15,15.93 1044.73,15.27 1044.07,16.85 1045.65,17.50 1044.07,18.15 1044.73,19.73 1043.15,19.07 1042.50,20.65 1041.85,19.07 1040.27,19.73 1040.93,18.15 1039.35,17.50 1040.93,16.85 1040.27,15.27 1041.85,15.93" fill="#fff"/>
<circle cx="1042.5" cy="17.5" r="0.6" fill="#efd27a"/>
<ellipse cx="1058.6" cy="11.8" rx="4.2" ry="3.9" fill="#8dc48d" stroke="#858585" stroke-width="0.8"/>
<path d="M1056.6,9 L1060.6,15.6" stroke="#a8a8a8" stroke-width="0.9"/>
<ellipse cx="1067.2" cy="12" rx="3.4" ry="3.7" fill="#8dc48d" stroke="#858585" stroke-width="0.8"/>
<path d="M1064,6.4 h5.6" stroke="#8a8a8a" stroke-width="0.7"/><circle cx="1064.2" cy="6.4" r="0.9" fill="#fff" stroke="#8a8a8a" stroke-width="0.5"/><circle cx="1069.6" cy="6.4" r="0.9" fill="#fff" stroke="#8a8a8a" stroke-width="0.5"/>
<path d="M1063.4,8 L1061.4,17" stroke="#9a9a9a" stroke-width="0.9"/>
<path d="M1062.4,20.8 V14.6 L1063.6,13.2 L1064.6,14.8 C1065.4,16 1068,16 1069,14.8 L1070.8,13 V20.8 Z" fill="#f3d54a" stroke="#e7b43a" stroke-width="0.7" stroke-dasharray="1.4 0.7"/>
<path d="M1081.4,8.4 L1085.6,18.8 L1089.6,9 L1094.2,6.2" stroke="#d2d2d2" stroke-width="1" fill="none"/>
<path d="M1083,10.6 L1087.8,14.6 M1090.6,7 L1087,13.6" stroke="#dcdcdc" stroke-width="1.2" fill="none"/>
<circle cx="1081.4" cy="8.2" r="1.1" fill="#f4f4f4" stroke="#cacaca" stroke-width="0.6"/>
<circle cx="1090.4" cy="7.6" r="1.1" fill="#f4f4f4" stroke="#cacaca" stroke-width="0.6"/>
<circle cx="1094.4" cy="6.2" r="1.1" fill="#f4f4f4" stroke="#cacaca" stroke-width="0.6"/>
<rect x="1089.3" y="13.8" width="6.4" height="6.8" fill="#ececec" stroke="#b6b6b6" stroke-width="0.9"/><circle cx="1092.4" cy="17.4" r="1.3" fill="#b8b8b8"/>
<path d="M1101.2,11 h9 l-4.5,4.8 z" fill="#9b9b9b"/>
<path transform="translate(1118,5.1)" d="M0.3,4.5 C0,1.6 1.6,0.2 3.6,0.3 C5.2,0.4 6.4,1.4 7.6,1.4 C8.8,1.4 10.4,0.6 12,0.6 C14,0.6 15.2,2 15,4.4 C14.9,6 14.6,7.2 13.6,7.8 C12.4,8 10.6,6.2 9,6.4 C7,6.8 5,9.6 3,10.8 C1.2,11.4 0.5,8 0.3,4.5 Z" fill="url(#gLt)" stroke="#a0a0a0" stroke-width="1.0"/>
<path d="M1121.4,15.6 L1127,11.6 L1131.4,13.2 C1128,15.6 1124.6,16.2 1121.4,15.6 Z" fill="#e0e0e0" stroke="#a8a8a8" stroke-width="0.8"/>
<path transform="translate(1142.2,5.1)" d="M0.3,4.5 C0,1.6 1.6,0.2 3.6,0.3 C5.2,0.4 6.4,1.4 7.6,1.4 C8.8,1.4 10.4,0.6 12,0.6 C14,0.6 15.2,2 15,4.4 C14.9,6 14.6,7.2 13.6,7.6 C12.4,7.8 11,6.4 9.6,6.6 C8,7 5.4,9 3.4,9.6 C1.6,10 0.5,8 0.3,4.5 Z" fill="url(#gLt)" stroke="#a0a0a0" stroke-width="1.0"/>
<path d="M1145.0,17.5 L1152.5,13.2 M1144.5,15.8 L1151.0,12" stroke="#b6b6b6" stroke-width="0.9" fill="none"/>
<path transform="translate(1167.9,5.1)" d="M0.3,4.5 C0,1.6 1.6,0.2 3.6,0.3 C5.2,0.4 6.4,1.4 7.6,1.4 C8.8,1.4 10.4,0.6 12,0.6 C14,0.6 15.2,2 15,4.4 C14.9,6 14.6,7.2 13.6,7.6 C12.4,7.8 11,6.4 9.6,6.6 C8,7 5.4,9 3.4,9.6 C1.6,10 0.5,8 0.3,4.5 Z" fill="url(#gLt)" stroke="#a0a0a0" stroke-width="1.0"/>
<path d="M1170.7,17.5 L1178.2,13.2 M1170.2,15.8 L1176.7,12" stroke="#b6b6b6" stroke-width="0.9" fill="none"/>
<path d="M1132.6,14.7 q-1.1,-0.3 -1.2,1 v3.7 q0,1.4 -1.3,1.2" stroke="#363c40" stroke-width="0.95" fill="none"/>
<path d="M1182.8,14.7 q-1.1,-0.3 -1.2,1 v3.7 q0,1.4 -1.3,1.2" stroke="#363c40" stroke-width="0.95" fill="none"/>
<text x="1153.7" y="20.8" font-family="Liberation Sans" font-weight="bold" font-size="7.6" fill="#2c3040">d</text>
<path d="M1192.2,11.4 L1201.2,5.2 L1207.9,13.8 L1200,20.5 Z" fill="#84c47a" stroke="#74b46a" stroke-width="0.5"/>
<path d="M1196.6,7.4 L1205.4,18" stroke="#dfe9da" stroke-width="1.9"/><path d="M1195.8,6.6 L1206,18.8" stroke="#7d8a78" stroke-width="0.5" stroke-dasharray="1.2 0.8"/>
<path d="M1196.6,14.6 L1203.6,9.4" stroke="#6cae5a" stroke-width="0.6"/>
<rect x="11" y="34" width="1" height="1" fill="#c3c3c3"/>
<rect x="11" y="37" width="1" height="1" fill="#c3c3c3"/>
<rect x="14" y="34" width="1" height="1" fill="#c3c3c3"/>
<rect x="14" y="37" width="1" height="1" fill="#c3c3c3"/>
<rect x="17" y="34" width="1" height="1" fill="#c3c3c3"/>
<rect x="17" y="37" width="1" height="1" fill="#c3c3c3"/>
<rect x="20" y="34" width="1" height="1" fill="#c3c3c3"/>
<rect x="20" y="37" width="1" height="1" fill="#c3c3c3"/>
<rect x="23" y="34" width="1" height="1" fill="#c3c3c3"/>
<rect x="23" y="37" width="1" height="1" fill="#c3c3c3"/>
<rect x="26" y="34" width="1" height="1" fill="#c3c3c3"/>
<rect x="26" y="37" width="1" height="1" fill="#c3c3c3"/>
<path d="M10,50.6 L17.6,47.2 L21.6,56.2 L13.6,59.8 Z" fill="#e9a23c" stroke="#d98626" stroke-width="0.6"/>
<path d="M11.6,49 L19.4,46.6 L22.4,55.4 L14.6,58.2 Z" fill="#f0b548" stroke="#dc8c2a" stroke-width="0.5"/>
<path d="M16.2,45.2 L26.2,47 L24.4,56.4 L15,54.6 Z" fill="#5f92cc" stroke="#4b7cba" stroke-width="0.6"/>
<rect x="20.3" y="55.099999999999994" width="5.5" height="5.4" rx="0.6" fill="#5f9d60" stroke="#4f8c52" stroke-width="0.5"/>
<circle cx="23.05" cy="57.8" r="1.75" fill="#f2f2f2"/>
<circle cx="17.6" cy="73.6" r="5.2" fill="#7ea4d4" stroke="#41689f" stroke-width="0.7"/>
<path d="M14.2,71.6 l2.4,-1.6 l1,1.4 l-1.8,1.6 z M18.2,70.2 l2.6,0.8 l0.4,2 l-2,0.2 z M15.8,74 l2,-0.6 l1,2 l-2,0.6 z" fill="#2c4a7c"/>
<path d="M9.8,73.8 L17.4,77 L17.4,84.8 L9.8,81 Z" fill="#f2bd3a" stroke="#d99a22" stroke-width="0.5"/>
<path d="M17.4,77 L25.6,73.8 L25.6,81.2 L17.4,84.8 Z" fill="#f8dc96" stroke="#e2aa36" stroke-width="0.5"/>
<path d="M9.8,73.8 L17.4,77 L25.6,73.8" stroke="#e8a630" stroke-width="0.9" fill="none"/>
<rect x="20.4" y="79.0" width="5.4" height="5.2" rx="0.8" fill="#f6e6b0" stroke="#e6b422" stroke-width="1.1"/>
<path d="M11.5,94.6 L15.700000000000001,104.6 L20.1,95.2 L24.700000000000003,94.2" stroke="#3b4f74" stroke-width="1" fill="none"/>
<circle cx="11.5" cy="94.4" r="1.05" fill="#fbfbfb" stroke="#5b6370" stroke-width="0.55"/>
<circle cx="20.5" cy="94.8" r="1.05" fill="#fbfbfb" stroke="#5b6370" stroke-width="0.55"/>
<circle cx="24.700000000000003" cy="94.1" r="1.05" fill="#fbfbfb" stroke="#5b6370" stroke-width="0.55"/>
<circle cx="15.700000000000001" cy="104.6" r="1.05" fill="#fbfbfb" stroke="#5b6370" stroke-width="0.55"/>
<rect x="20.4" y="103.4" width="5.4" height="5.2" rx="0.8" fill="#f6e6b0" stroke="#e6b422" stroke-width="1.1"/>
<path d="M9.8,132.8 C11.4,125.20000000000002 17.8,118.20000000000002 25.200000000000003,116.80000000000001 C25.6,121.4 22.200000000000003,126.20000000000002 16.200000000000003,127.80000000000001 C13.8,128.60000000000002 11.4,130.4 10.4,133.0 Z" fill="url(#gBlue)" stroke="#3f6fae" stroke-width="0.6"/>
<path d="M10.200000000000001,132.20000000000002 C12.8,126.4 17.8,121.4 24.4,117.60000000000001" stroke="#2c4f88" stroke-width="0.7" fill="none"/>
<path d="M14.8,125.20000000000002 C17.8,124.80000000000001 21.4,122.4 23.4,119.4" stroke="#c9dcf2" stroke-width="0.8" fill="none"/>
<rect x="20.4" y="127.2" width="5.4" height="5.2" rx="0.8" fill="#f6e6b0" stroke="#e6b422" stroke-width="1.1"/>
<rect x="14.1" y="142.0" width="0.9" height="3.4" fill="#34538c"/>
<rect x="16.2" y="142.0" width="0.9" height="3.4" fill="#34538c"/>
<rect x="18.3" y="142.0" width="0.9" height="3.4" fill="#34538c"/>
<rect x="20.4" y="142.0" width="0.9" height="3.4" fill="#34538c"/>
<rect x="22.5" y="142.0" width="0.9" height="3.4" fill="#34538c"/>
<rect x="14.1" y="152.0" width="0.9" height="2.6" fill="#34538c"/>
<rect x="16.2" y="152.0" width="0.9" height="2.6" fill="#34538c"/>
<rect x="18.3" y="152.0" width="0.9" height="2.6" fill="#34538c"/>
<rect x="20.4" y="152.0" width="0.9" height="2.6" fill="#34538c"/>
<rect x="12" y="145.2" width="12.8" height="7" rx="1" fill="#5f8fc9" stroke="#4a79b6" stroke-width="0.6"/>
<rect x="13" y="146.0" width="10.8" height="2" fill="#7aa5d8" opacity="0.7"/>
<rect x="20.4" y="151.20000000000002" width="5.4" height="5.2" rx="0.8" fill="#f6e6b0" stroke="#e6b422" stroke-width="1.1"/>
<rect x="11" y="170" width="1" height="1" fill="#c3c3c3"/>
<rect x="11" y="173" width="1" height="1" fill="#c3c3c3"/>
<rect x="14" y="170" width="1" height="1" fill="#c3c3c3"/>
<rect x="14" y="173" width="1" height="1" fill="#c3c3c3"/>
<rect x="17" y="170" width="1" height="1" fill="#c3c3c3"/>
<rect x="17" y="173" width="1" height="1" fill="#c3c3c3"/>
<rect x="20" y="170" width="1" height="1" fill="#c3c3c3"/>
<rect x="20" y="173" width="1" height="1" fill="#c3c3c3"/>
<rect x="23" y="170" width="1" height="1" fill="#c3c3c3"/>
<rect x="23" y="173" width="1" height="1" fill="#c3c3c3"/>
<rect x="26" y="170" width="1" height="1" fill="#c3c3c3"/>
<rect x="26" y="173" width="1" height="1" fill="#c3c3c3"/>
<path d="M5.4,182.79999999999998 L9.600000000000001,192.79999999999998 L14.0,183.39999999999998 L18.6,182.39999999999998" stroke="#3b4f74" stroke-width="1" fill="none"/>
<circle cx="5.4" cy="182.6" r="1.05" fill="#fbfbfb" stroke="#5b6370" stroke-width="0.55"/>
<circle cx="14.399999999999999" cy="183.0" r="1.05" fill="#fbfbfb" stroke="#5b6370" stroke-width="0.55"/>
<circle cx="18.6" cy="182.29999999999998" r="1.05" fill="#fbfbfb" stroke="#5b6370" stroke-width="0.55"/>
<circle cx="9.600000000000001" cy="192.79999999999998" r="1.05" fill="#fbfbfb" stroke="#5b6370" stroke-width="0.55"/>
<rect x="14.4" y="191.3" width="5.5" height="5.4" rx="0.6" fill="#5f9d60" stroke="#4f8c52" stroke-width="0.5"/>
<circle cx="17.15" cy="194.0" r="1.75" fill="#f2f2f2"/>
<rect x="3.90" y="205.00" width="4.4" height="4.3" fill="#2d3152"/>
<rect x="8.25" y="205.00" width="4.4" height="4.3" fill="#5f92cc"/>
<rect x="12.60" y="205.00" width="4.4" height="4.3" fill="#2d3152"/>
<rect x="3.90" y="209.25" width="4.4" height="4.3" fill="#5f92cc"/>
<rect x="8.25" y="209.25" width="4.4" height="4.3" fill="#2d3152"/>
<rect x="12.60" y="209.25" width="4.4" height="4.3" fill="#5f92cc"/>
<rect x="3.90" y="213.50" width="4.4" height="4.3" fill="#2d3152"/>
<rect x="8.25" y="213.50" width="4.4" height="4.3" fill="#5f92cc"/>
<rect x="12.60" y="213.50" width="4.4" height="4.3" fill="#6b9bd2"/>
<rect x="14.4" y="215.3" width="5.5" height="5.4" rx="0.6" fill="#5f9d60" stroke="#4f8c52" stroke-width="0.5"/>
<circle cx="17.15" cy="218.0" r="1.75" fill="#f2f2f2"/>
<path d="M6.8,232.6 C7.2,229.8 10.4,229 12.4,230.6 C14.6,232.4 14,236.4 11.4,238.8 C10.2,240 8.8,240.8 7.4,241.6 L7,240.4 C9,239 10.4,237.6 10.6,235.8 C8.6,236.4 6.6,235 6.8,232.6 Z" fill="#4e7cb6" stroke="#3f6aa4" stroke-width="0.5"/>
<rect x="14.4" y="239.3" width="5.5" height="5.4" rx="0.6" fill="#5f9d60" stroke="#4f8c52" stroke-width="0.5"/>
<circle cx="17.15" cy="242.0" r="1.75" fill="#f2f2f2"/>
<path d="M3.9,268.6 C5.5,261.0 11.9,254.00000000000003 19.3,252.60000000000002 C19.7,257.20000000000005 16.3,262.0 10.3,263.6 C7.9,264.40000000000003 5.5,266.20000000000005 4.5,268.8 Z" fill="url(#gBlue)" stroke="#3f6fae" stroke-width="0.6"/>
<path d="M4.3,268.0 C6.9,262.20000000000005 11.9,257.20000000000005 18.5,253.40000000000003" stroke="#2c4f88" stroke-width="0.7" fill="none"/>
<path d="M8.9,261.0 C11.9,260.6 15.5,258.20000000000005 17.5,255.20000000000002" stroke="#c9dcf2" stroke-width="0.8" fill="none"/>
<rect x="14.4" y="263.3" width="5.5" height="5.4" rx="0.6" fill="#5f9d60" stroke="#4f8c52" stroke-width="0.5"/>
<circle cx="17.15" cy="266.0" r="1.75" fill="#f2f2f2"/>
<rect x="5" y="278.2" width="13.8" height="13.4" rx="1.2" fill="#aac6ea" stroke="#7f9fcc" stroke-width="0.7"/>
<path d="M7,279.6 L9.6,288.6 L13.6,279.8 L17.4,279.4" stroke="#5877a4" stroke-width="0.8" fill="#dbe6f4" fill-opacity="0.8"/>
<circle cx="9.6" cy="288.8" r="1.1" fill="#fff" stroke="#777" stroke-width="0.5"/>
<rect x="13.2" y="286.2" width="6.8" height="6.4" rx="1.2" fill="#5f9d60" stroke="#4d8a50" stroke-width="0.5"/><path d="M16.6,287.4 v4 M14.6,289.4 h4" stroke="#fff" stroke-width="1.5"/>
<path d="M4.2,305 C3.6,302 6,300.6 8.4,301 C10,300.4 13,300.4 14.6,301.6 C16.4,303 16,306.4 14.6,308.6 C14,309.8 14.4,311 13.6,311.6 C12.6,312 12,311 12,309.8 C11.4,311.4 10.6,312.6 9.2,312.2 C8.2,311.8 8.4,309.6 8.2,308.4 C6.4,308.8 4.6,307.4 4.2,305 Z" fill="#4d7bb5" stroke="#35609a" stroke-width="0.6"/>
<path d="M8.6,303.4 C8.2,305.4 8.4,307 9,308.6 M11.6,303 C12.6,304.6 12.4,306.6 11.8,308.4" stroke="#9bbbe2" stroke-width="0.8" fill="none"/>
<rect x="14.4" y="311.3" width="5.5" height="5.4" rx="0.6" fill="#5f9d60" stroke="#4f8c52" stroke-width="0.5"/>
<circle cx="17.15" cy="314.0" r="1.75" fill="#f2f2f2"/>
<path d="M25,307 h9 l-4.5,4.8 z" fill="#32344a"/>
<circle cx="11.7" cy="332.2" r="7.4" fill="url(#gGlobe)" stroke="#5584c4" stroke-width="0.8"/>
<path d="M6.699999999999999,329.59999999999997 l1.8,-1.8 l1.6,0.4 l-0.4,1.6 l-1.4,0.8 l0.6,1.4 l-0.8,2.4 l-1,-1.8 z M11.1,327.59999999999997 l1.4,-0.6 l0.6,1.6 l-1,1.2 z M13.299999999999999,328.59999999999997 l2.2,-1 l1.8,1.6 l-0.2,2.4 l-1.4,-0.6 l-0.6,2.2 l-1.2,-1.6 l0.2,-1.6 z M11.1,331.2 l1,0.4 l0,3 l-0.8,1.8 l-0.6,-2.6 z M15.899999999999999,334.2 l1,0.4 l-0.6,1.4 z" fill="#36588f"/>
<rect x="14.4" y="335.0" width="5.5" height="5.4" rx="0.6" fill="#5f9d60" stroke="#4f8c52" stroke-width="0.5"/>
<circle cx="17.15" cy="337.7" r="1.75" fill="#f2f2f2"/>
<path d="M25,331.2 h9 l-4.5,4.8 z" fill="#32344a"/>
<circle cx="11.7" cy="356" r="7.4" fill="#263c66" stroke="#1b2c4e" stroke-width="0.9"/>
<clipPath id="cpw"><circle cx="11.7" cy="356" r="6.6"/></clipPath><g clip-path="url(#cpw)">
<rect x="3.6999999999999993" y="350.2" width="16" height="2" fill="#6f9cd6"/>
<rect x="3.6999999999999993" y="352.6" width="16" height="2" fill="#c9dbf2"/>
<rect x="3.6999999999999993" y="354.9" width="16" height="2" fill="#86aee2"/>
<rect x="3.6999999999999993" y="357.3" width="16" height="2" fill="#c9dbf2"/>
<rect x="3.6999999999999993" y="359.6" width="16" height="2" fill="#6f9cd6"/>
<ellipse cx="11.7" cy="356" rx="3.4" ry="7.2" fill="none" stroke="#22365c" stroke-width="0.9"/>
<path d="M11.7,349 V363" stroke="#3a5486" stroke-width="0.6"/>
<rect x="9.299999999999999" y="355.2" width="4.8" height="2.2" fill="#1f3258"/>
</g>
<rect x="14.4" y="359.1" width="5.5" height="5.4" rx="0.6" fill="#5f9d60" stroke="#4f8c52" stroke-width="0.5"/>
<circle cx="17.15" cy="361.8" r="1.75" fill="#f2f2f2"/>
<circle cx="11.7" cy="380.1" r="7.2" fill="#fafcff" stroke="#4b8fe0" stroke-width="1"/>
<path d="M4.699999999999999,379.1 h14 M5.299999999999999,382.70000000000005 h12.8 M5.699999999999999,376.1 h12" stroke="#cfe1f6" stroke-width="0.7"/>
<path d="M7.1,376.90000000000003 L11.1,385.1 L14.1,376.70000000000005 L17.1,376.70000000000005" stroke="#454f60" stroke-width="0.9" fill="none"/>
<circle cx="7.1" cy="376.70000000000005" r="0.9" fill="#fff" stroke="#555" stroke-width="0.5"/>
<circle cx="14.299999999999999" cy="376.5" r="0.9" fill="#fff" stroke="#555" stroke-width="0.5"/>
<circle cx="17.299999999999997" cy="376.90000000000003" r="0.9" fill="#fff" stroke="#555" stroke-width="0.5"/>
<circle cx="11.1" cy="385.1" r="0.9" fill="#fff" stroke="#555" stroke-width="0.5"/>
<rect x="14.4" y="383.3" width="5.5" height="5.4" rx="0.6" fill="#5f9d60" stroke="#4f8c52" stroke-width="0.5"/>
<circle cx="17.15" cy="386.0" r="1.75" fill="#f2f2f2"/>
<path d="M25,379.2 h9 l-4.5,4.8 z" fill="#32344a"/>
<rect x="8.2" y="398.1" width="0.9" height="3.4" fill="#34538c"/>
<rect x="10.299999999999999" y="398.1" width="0.9" height="3.4" fill="#34538c"/>
<rect x="12.399999999999999" y="398.1" width="0.9" height="3.4" fill="#34538c"/>
<rect x="14.5" y="398.1" width="0.9" height="3.4" fill="#34538c"/>
<rect x="16.6" y="398.1" width="0.9" height="3.4" fill="#34538c"/>
<rect x="8.2" y="408.1" width="0.9" height="2.6" fill="#34538c"/>
<rect x="10.299999999999999" y="408.1" width="0.9" height="2.6" fill="#34538c"/>
<rect x="12.399999999999999" y="408.1" width="0.9" height="2.6" fill="#34538c"/>
<rect x="14.5" y="408.1" width="0.9" height="2.6" fill="#34538c"/>
<rect x="6.1" y="401.3" width="12.8" height="7" rx="1" fill="#5f8fc9" stroke="#4a79b6" stroke-width="0.6"/>
<rect x="7.1" y="402.1" width="10.8" height="2" fill="#7aa5d8" opacity="0.7"/>
<rect x="14.5" y="407.4" width="5.4" height="5.2" rx="0.8" fill="#f6e6b0" stroke="#e6b422" stroke-width="1.1"/>
<path d="M25,403.2 h9 l-4.5,4.8 z" fill="#32344a"/>
<rect x="11" y="426" width="1" height="1" fill="#c3c3c3"/>
<rect x="11" y="429" width="1" height="1" fill="#c3c3c3"/>
<rect x="14" y="426" width="1" height="1" fill="#c3c3c3"/>
<rect x="14" y="429" width="1" height="1" fill="#c3c3c3"/>
<rect x="17" y="426" width="1" height="1" fill="#c3c3c3"/>
<rect x="17" y="429" width="1" height="1" fill="#c3c3c3"/>
<rect x="20" y="426" width="1" height="1" fill="#c3c3c3"/>
<rect x="20" y="429" width="1" height="1" fill="#c3c3c3"/>
<rect x="23" y="426" width="1" height="1" fill="#c3c3c3"/>
<rect x="23" y="429" width="1" height="1" fill="#c3c3c3"/>
<rect x="26" y="426" width="1" height="1" fill="#c3c3c3"/>
<rect x="26" y="429" width="1" height="1" fill="#c3c3c3"/>
<path d="M10.6,440.4 V449.4 C10.6,452.8 25.6,452.8 25.6,449.4 V440.4 Z" fill="#5c8ac2" stroke="#4a74ac" stroke-width="0.6"/>
<path d="M10.6,443.8 C10.6,446.6 25.6,446.6 25.6,443.8 M10.6,447 C10.6,449.8 25.6,449.8 25.6,447" stroke="#3d659e" stroke-width="0.8" fill="none"/>
<path d="M11.4,445 v1.4 M11.4,448.4 v1.4" stroke="#c6daf2" stroke-width="1"/>
<ellipse cx="18.1" cy="440.4" rx="7.5" ry="2.8" fill="#a9c6ea" stroke="#5b87c2" stroke-width="0.6"/>
<rect x="11" y="466" width="1" height="1" fill="#c3c3c3"/>
<rect x="11" y="469" width="1" height="1" fill="#c3c3c3"/>
<rect x="14" y="466" width="1" height="1" fill="#c3c3c3"/>
<rect x="14" y="469" width="1" height="1" fill="#c3c3c3"/>
<rect x="17" y="466" width="1" height="1" fill="#c3c3c3"/>
<rect x="17" y="469" width="1" height="1" fill="#c3c3c3"/>
<rect x="20" y="466" width="1" height="1" fill="#c3c3c3"/>
<rect x="20" y="469" width="1" height="1" fill="#c3c3c3"/>
<rect x="23" y="466" width="1" height="1" fill="#c3c3c3"/>
<rect x="23" y="469" width="1" height="1" fill="#c3c3c3"/>
<rect x="26" y="466" width="1" height="1" fill="#c3c3c3"/>
<rect x="26" y="469" width="1" height="1" fill="#c3c3c3"/>
<circle cx="17.9" cy="484.7" r="7.8" fill="#1a49a2"/>
<text x="17.9" y="487.6" text-anchor="middle" font-family="Liberation Sans" font-weight="bold" font-size="7.4" fill="#fff" textLength="13.4" lengthAdjust="spacingAndGlyphs">WKT</text>
<rect x="11" y="506" width="1" height="1" fill="#c3c3c3"/>
<rect x="11" y="509" width="1" height="1" fill="#c3c3c3"/>
<rect x="14" y="506" width="1" height="1" fill="#c3c3c3"/>
<rect x="14" y="509" width="1" height="1" fill="#c3c3c3"/>
<rect x="17" y="506" width="1" height="1" fill="#c3c3c3"/>
<rect x="17" y="509" width="1" height="1" fill="#c3c3c3"/>
<rect x="20" y="506" width="1" height="1" fill="#c3c3c3"/>
<rect x="20" y="509" width="1" height="1" fill="#c3c3c3"/>
<rect x="23" y="506" width="1" height="1" fill="#c3c3c3"/>
<rect x="23" y="509" width="1" height="1" fill="#c3c3c3"/>
<rect x="26" y="506" width="1" height="1" fill="#c3c3c3"/>
<rect x="26" y="509" width="1" height="1" fill="#c3c3c3"/>
<path d="M14,518.4 h5.2 c1.4,0 2,0.8 2,2 v3 c0,1.2 -0.8,2 -2,2 h-4 c-1.4,0 -2.2,0.8 -2.2,2.2 v1.2 h-1 c-1.2,0 -1.6,-1 -1.6,-2.2 v-2 c0,-1.4 0.8,-2.2 2,-2.2 h4.6 v-0.8 h-4.6 v-1.6 c0,-1 0.6,-1.6 1.6,-1.6 z" fill="#4572a8"/>
<circle cx="14.8" cy="520" r="0.7" fill="#dfe9f6"/>
<path d="M21.4,531.8 h-5.2 c-1.4,0 -2,-0.8 -2,-2 v-3 c0,-1.2 0.8,-2 2,-2 h4 c1.4,0 2.2,-0.8 2.2,-2.2 v-1.2 h1 c1.2,0 1.6,1 1.6,2.2 v2 c0,1.4 -0.8,2.2 -2,2.2 h-4.6 v0.8 h4.6 v1.6 c0,1 -0.6,1.6 -1.6,1.6 z" fill="#f1d548"/>
<circle cx="20.6" cy="530.2" r="0.7" fill="#fff6c8"/>
<path d="M21.6,529 L25,530.6 L21.8,532.2" stroke="#2a2a2a" stroke-width="0.9" fill="none"/>
<rect x="11" y="541" width="15" height="16" fill="#f8f8f8"/>
<rect x="14.6" y="542.6" width="9.8" height="7.6" fill="#b7aff0"/>
<circle cx="15.6" cy="549.8" r="3.5" fill="none" stroke="#d68a5c" stroke-width="0.9"/>
<rect x="11" y="565" width="15" height="16" fill="#f8f8f8"/>
<rect x="17" y="567.6" width="7.4" height="6.4" fill="#b7aff0"/>
<circle cx="15.4" cy="575.2" r="3.2" fill="none" stroke="#d68a5c" stroke-width="0.9"/>
<text x="12" y="571.6" font-family="Liberation Sans" font-weight="bold" font-size="6.2" fill="#141830" textLength="12.6" lengthAdjust="spacingAndGlyphs">Prev</text>
<text x="12" y="578" font-family="Liberation Sans" font-weight="bold" font-size="6.2" fill="#141830" textLength="12.6" lengthAdjust="spacingAndGlyphs">Inter</text>
<rect x="11" y="589" width="15" height="16" fill="#f8f8f8"/>
<rect x="17" y="591.6" width="7.4" height="6.4" fill="#b7aff0"/>
<circle cx="15.4" cy="599.2" r="3.2" fill="none" stroke="#d68a5c" stroke-width="0.9"/>
<text x="12" y="595.6" font-family="Liberation Sans" font-weight="bold" font-size="6.2" fill="#141830" textLength="12.6" lengthAdjust="spacingAndGlyphs">Prev</text>
<text x="12" y="602" font-family="Liberation Sans" font-weight="bold" font-size="6.2" fill="#141830" textLength="9.6" lengthAdjust="spacingAndGlyphs">Clip</text>
<text x="10" y="621.4" font-family="Liberation Sans" font-weight="bold" font-size="10.5" fill="#111">W</text>
<text x="14.6" y="626.6" font-family="Liberation Sans" font-weight="bold" font-size="10" fill="#6e1410">K</text>
<text x="20.4" y="629.2" font-family="Liberation Sans" font-weight="bold" font-size="9.5" fill="#111">T</text>
<rect x="275.5" y="33.5" width="10" height="10" rx="2" fill="none" stroke="#5f7760"/>
<rect x="279.5" y="35.5" width="4" height="4" rx="1" fill="none" stroke="#5f7760"/>
<rect x="277.5" y="37.5" width="4" height="4" rx="1" fill="#f0f0f0" stroke="#5f7760"/>
<rect x="289.5" y="33.5" width="10" height="10" rx="2" fill="none" stroke="#5f7760"/>
<path d="M291.8,35.8 L297.2,41.2 M297.2,35.8 L291.8,41.2" stroke="#5f7760" stroke-width="1.7"/>
<path d="M58.6,62 L62.8,57.6" stroke="#e8962e" stroke-width="1.8" stroke-linecap="round"/>
<path d="M51.2,59 L58.6,61 L59.8,64.2 L56,68.6 L49,65.6 Z" fill="#e9a45a" stroke="#dd9040" stroke-width="0.5"/>
<path d="M51.4,59.2 L57,60.6 L55.6,62.8 L50.6,61.2 Z" fill="#f0d848"/>
<path d="M50,61.6 L53.2,62.4 L52.6,64.6 L49.4,63.6 Z" fill="#74a6dc"/>
<path d="M50.4,66 l1,0.5 M53,67 l1,0.5" stroke="#c46a28" stroke-width="0.9"/>
<path d="M74.4,64.6 V69.6 H80.6" stroke="#7d7d7d" stroke-width="0.9" fill="none"/>
<path d="M76.2,67.6 V59 H84.6 V64.8 M76.2,67.6 H81.6" stroke="#7d7d7d" stroke-width="0.9" fill="none"/>
<path d="M78.4,58.8 V57.4 H86.6 V65" stroke="#8a8a8a" stroke-width="0.8" fill="none"/>
<path d="M79.8,60 V64.8 C79.8,66.6 82.6,66.6 82.6,64.8 V57 C82.6,55 80.4,55 80.4,57" stroke="#3f72b8" stroke-width="0.9" fill="none"/>
<rect x="82.3" y="65.3" width="5.5" height="5.4" rx="0.6" fill="#5f9d60" stroke="#4f8c52" stroke-width="0.5"/>
<circle cx="85.05" cy="68.0" r="1.75" fill="#f2f2f2"/>
<path d="M98.8,63 C102,58 109.6,57.4 114.2,63.4 C110,68.6 102.4,68.4 98.8,63 Z" fill="#fafafa" stroke="#9a9a9a" stroke-width="0.8"/>
<path d="M99.6,60.8 C103.4,57.2 109.4,57 113,60.2" stroke="#b0b0b0" stroke-width="0.7" fill="none"/>
<circle cx="105.9" cy="62.8" r="3.7" fill="#5c92d4" stroke="#4a7cbc" stroke-width="0.5"/><circle cx="105.9" cy="62.4" r="1.4" fill="#111"/><circle cx="106.6" cy="61.8" r="0.5" fill="#fff"/>
<path d="M109.8,68.2 h6.2 l-3.1,2.8 z" fill="#32344a"/>
<path d="M124,55.8 H138.2 V58.4 L132.8,63.8 V70.8 L129.4,69.2 V63.8 L124,58.4 Z" fill="#6497d6" stroke="#4e80c2" stroke-width="0.6"/>
<rect x="124.6" y="56.2" width="13" height="2" fill="#f2d640"/>
<path d="M156.8,58.4 C155.6,56 151.2,55.8 151,58.6 C150.9,60.4 152.8,61 154.6,60.9 C152.4,60.9 150,61.6 150.2,63.6 C150.5,66.6 155.6,66.2 157.2,63.8" stroke="#23244e" stroke-width="1.4" fill="none"/>
<path d="M156.8,63.2 H164 L163.4,70.4 H157.6 Z" fill="#a4a4a4"/><path d="M158.6,64.8 H162.2 L161.8,70.4 H159.2 Z" fill="#e4e4e4"/>
<path d="M169,61 h9 l-4.5,4.8 z" fill="#32344a"/>
<path d="M186.4,57.2 H200 M187.6,57.2 V68.6" stroke="#9a9a9a" stroke-width="0.9" fill="none"/>
<rect x="190.5" y="60.5" width="2.3" height="2.4" fill="#f8d880" stroke="#e29a12" stroke-width="0.8"/>
<rect x="190.5" y="66.3" width="2.3" height="2.4" fill="#f8d880" stroke="#e29a12" stroke-width="0.8"/>
<path d="M194,56.4 H198 V64 H201 L196,69.8 L191,64 H194 Z" fill="#6f9fd6" stroke="#33517f" stroke-width="0.7"/>
<path d="M211,57.2 H225 M212.4,57.2 V68.6" stroke="#9a9a9a" stroke-width="0.9" fill="none"/>
<rect x="215.3" y="60.5" width="2.3" height="2.4" fill="#f8d880" stroke="#e29a12" stroke-width="0.8"/>
<rect x="215.3" y="66.3" width="2.3" height="2.4" fill="#f8d880" stroke="#e29a12" stroke-width="0.8"/>
<path d="M221,55.2 L226,59.9 H223 V68.6 H219 V59.9 H216.2 Z" fill="#6f9fd6" stroke="#33517f" stroke-width="0.7"/>
<rect x="236.6" y="56.8" width="11.2" height="10.6" fill="#f4f4f4" stroke="#858585" stroke-width="1.1"/>
<rect x="244.2" y="65.4" width="5.8" height="4.6" rx="1.2" fill="#c97c3e" stroke="#b86a2c" stroke-width="0.5"/><rect x="245.4" y="67" width="3.4" height="1.4" fill="#fff"/>
<path d="M67.7,89.2 L70.3,92.6 L73.9,85.2" stroke="#000" stroke-width="2.0" fill="none" stroke-linejoin="miter"/>
<g transform="translate(87.2,95.6) rotate(-57)">
<path d="M0,0 L4.21,-2.2 V2.2 Z" fill="#dce8f4"/>
<rect x="4.21" y="-2.2" width="8.74" height="4.4" fill="#b47850"/>
<rect x="4.21" y="-0.66" width="8.74" height="1.32" fill="#c48a58"/>
<rect x="12.95" y="-2.2" width="2.65" height="4.4" fill="#dfe8f2"/>
<rect x="12.95" y="-2.2" width="0.94" height="4.4" fill="#b8c8dc"/>
</g>
<rect x="1105" y="716" width="1" height="1" fill="#b8b8b8"/>
<rect x="1108" y="716" width="1" height="1" fill="#b8b8b8"/>
<rect x="1111" y="716" width="1" height="1" fill="#b8b8b8"/>
<rect x="1114" y="716" width="1" height="1" fill="#b8b8b8"/>
<rect x="1117" y="716" width="1" height="1" fill="#b8b8b8"/>
<rect x="1120" y="716" width="1" height="1" fill="#b8b8b8"/>
<rect x="305" y="497" width="1" height="1" fill="#bcbcbc"/>
<rect x="305" y="500" width="1" height="1" fill="#bcbcbc"/>
<rect x="305" y="503" width="1" height="1" fill="#bcbcbc"/>
<rect x="305" y="506" width="1" height="1" fill="#bcbcbc"/>
<rect x="305" y="509" width="1" height="1" fill="#bcbcbc"/>
<rect x="305" y="512" width="1" height="1" fill="#bcbcbc"/>
<g transform="translate(330.7,760.5) rotate(-45)">
<path d="M-3.2,-4.6 V0.5 A3.2,3.2 0 0 0 3.2,0.5 V-4.6" stroke="#e2996a" stroke-width="4" fill="none"/>
<path d="M-3.2,-4.6 V0.5 A3.2,3.2 0 0 0 3.2,0.5 V-4.6" stroke="#7c100c" stroke-width="3.1" fill="none"/>
<path d="M-3.2,-4.7 v1.9 M3.2,-4.7 v1.9" stroke="#fff" stroke-width="2.9"/>
</g>
<path d="M351,755 L354.6,762.8 L358.8,756.4 H363" stroke="#78b878" stroke-width="0.9" fill="none"/>
<path d="M354.6,762.8 L354.8,765" stroke="#b0b0b0" stroke-width="1.2"/>
<circle cx="351" cy="755" r="1" fill="#d8d8d8" stroke="#9a9a9a" stroke-width="0.5"/>
<circle cx="358.8" cy="756.2" r="1" fill="#d8d8d8" stroke="#9a9a9a" stroke-width="0.5"/>
<circle cx="363.2" cy="756.4" r="1" fill="#d8d8d8" stroke="#9a9a9a" stroke-width="0.5"/>
<circle cx="354.6" cy="762.8" r="1" fill="#d8d8d8" stroke="#9a9a9a" stroke-width="0.5"/>
<circle cx="356.2" cy="754.8" r="1" fill="#d8d8d8" stroke="#9a9a9a" stroke-width="0.5"/>
<path d="M358.2,759.2 L360,761" stroke="#333" stroke-width="2.4"/><path d="M359.8,760.8 L363,764.6" stroke="#d69a34" stroke-width="2"/><path d="M362.4,764 L363.2,765" stroke="#444" stroke-width="2"/>
<path d="M486.2,764.4 h6 l-3.0,2.6 z" fill="#32344a"/>
<path d="M504,752.4 L507.8,758 M508.2,758 L516.8,755.2" stroke="#6cc06c" stroke-width="1.1"/>
<path d="M507.9,759 V765.8" stroke="#a4a4a4" stroke-width="1.6"/>
<rect x="506.6" y="756.9" width="2.6" height="2.6" fill="#b4b4b4" stroke="#8e8e8e" stroke-width="0.6"/>
<path d="M628,752.2 L642,765.8 M642,752.2 L628,765.8" stroke="#78b878" stroke-width="1.1"/>
<rect x="633.4" y="757.7" width="2.8" height="2.8" fill="#a8a8a8"/>
<path d="M347.7,803.2 L350.3,806.6 L353.9,799.2" stroke="#000" stroke-width="2.0" fill="none" stroke-linejoin="miter"/>
<path d="M798.7,803.2 L801.3,806.6 L804.9,799.2" stroke="#000" stroke-width="2.0" fill="none" stroke-linejoin="miter"/>
<g transform="translate(364.3,809.8) rotate(-58)">
<path d="M0,0 L4.32,-2.4 V2.4 Z" fill="#f2f2f2"/>
<rect x="4.32" y="-2.4" width="8.96" height="4.8" fill="#c87030"/>
<rect x="4.32" y="-1.32" width="8.96" height="2.64" fill="#eaa222"/>
<rect x="13.28" y="-2.4" width="2.72" height="4.8" fill="#f6f6f6"/>
<rect x="13.28" y="-2.4" width="0.96" height="4.8" fill="#e0e0e0"/>
</g>
</svg>
</body></html>
